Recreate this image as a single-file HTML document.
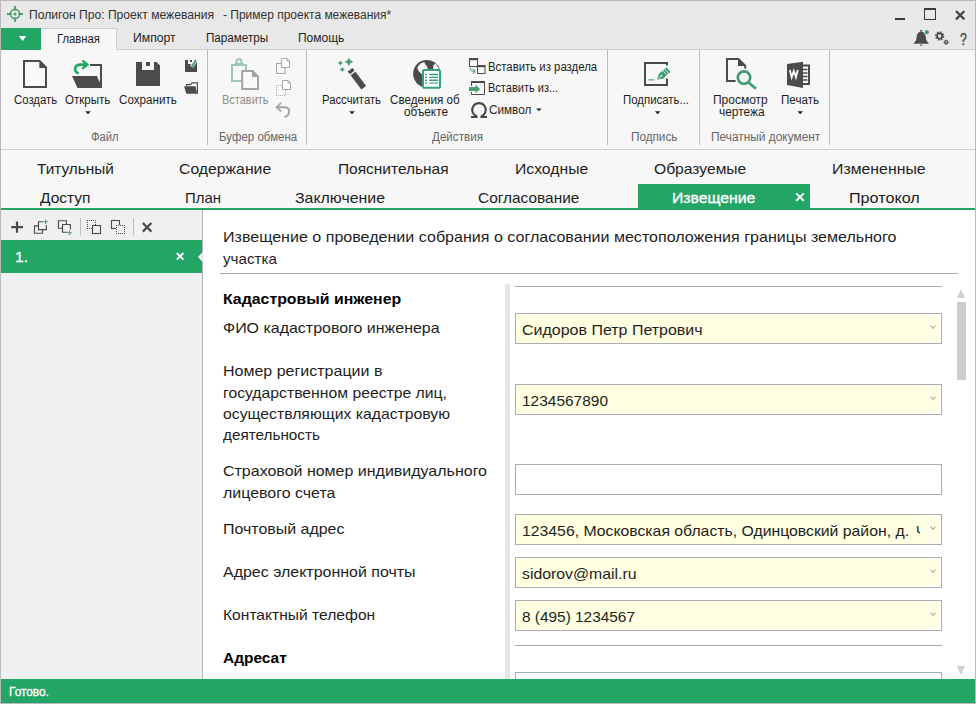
<!DOCTYPE html>
<html><head><meta charset="utf-8"><title>Полигон Про</title>
<style>
html,body{margin:0;padding:0;}
body{width:976px;height:704px;position:relative;overflow:hidden;background:#f7f7f7;font-family:"Liberation Sans",sans-serif;}
.t{position:absolute;white-space:pre;line-height:1;transform-origin:0 0;font-family:"Liberation Sans",sans-serif;}
.a{position:absolute;}
.f{position:absolute;left:515px;width:427px;height:31px;box-sizing:border-box;border:1px solid #abadb3;background:#fff;}
.f.y{background:#ffffe1;}
.f.y i{position:absolute;right:0;top:0;width:14px;height:27px;border:1px solid #fff;background:#ffffe6;}
.f.y i:after{content:"";position:absolute;left:5.1px;top:8.9px;width:2.9px;height:2.9px;border-right:1.1px solid #a3a3ab;border-bottom:1.1px solid #a3a3ab;transform:rotate(45deg);transform-origin:center;}
.w{-webkit-text-stroke:0.35px #fff;}
.q{-webkit-text-stroke:0.45px #4b4b4b;}

</style></head>
<body>
<!-- window frame -->
<div class="a" style="left:0;top:0;width:976px;height:28px;background:#e8e8e8"></div>
<div class="a" style="left:0;top:28px;width:976px;height:21px;background:#e8e8e8"></div>
<!-- file button -->
<!-- active menu tab -->
<div class="a" style="left:0;top:49px;width:976px;height:1px;background:#cdcdcd"></div>
<div class="a" style="left:41px;top:28px;width:76px;height:22px;background:#f7f7f7;border-top:1px solid #cfcfcf;border-right:1px solid #cfcfcf;box-sizing:border-box"></div>
<div class="a" style="left:1px;top:28px;width:40px;height:22px;background:#23a566"></div>
<!-- ribbon -->
<div class="a" style="left:0;top:50px;width:976px;height:99px;background:#f7f7f7"></div>
<div class="a" style="left:0;top:149px;width:976px;height:1px;background:#cfcfcf"></div>
<!-- ribbon separators -->
<div class="a" style="left:207px;top:50px;width:1px;height:95px;background:#bdbdbd"></div>
<div class="a" style="left:306px;top:50px;width:1px;height:95px;background:#bdbdbd"></div>
<div class="a" style="left:607px;top:50px;width:1px;height:95px;background:#bdbdbd"></div>
<div class="a" style="left:699px;top:50px;width:1px;height:95px;background:#bdbdbd"></div>
<div class="a" style="left:829px;top:50px;width:1px;height:95px;background:#bdbdbd"></div>
<!-- section tabs area -->
<div class="a" style="left:0;top:150px;width:976px;height:58px;background:#f7f7f7"></div>
<div class="a" style="left:638px;top:184px;width:172px;height:24px;background:#23a566"></div>
<div class="a" style="left:0;top:208px;width:976px;height:2px;background:#23a566"></div>
<!-- left panel -->
<div class="a" style="left:0;top:210px;width:202px;height:470px;background:#f0f0f0"></div>
<div class="a" style="left:202px;top:210px;width:1px;height:470px;background:#b5b5b5"></div>
<div class="a" style="left:1px;top:240px;width:201px;height:33px;background:#23a566"></div>
<!-- content -->
<div class="a" style="left:203px;top:210px;width:773px;height:470px;background:#fff"></div>
<div class="a" style="left:220px;top:273px;width:738px;height:1px;background:#a9a9a9"></div>
<!-- form -->
<div class="a" style="left:505px;top:284px;width:5px;height:396px;background:#e6e6e6"></div>
<div class="a" style="left:515px;top:286px;width:427px;height:1px;background:#a9a9a9"></div>
<div class="f y" style="top:313px"><i></i></div>
<div class="f y" style="top:384px"><i></i></div>
<div class="f" style="top:464px"></div>
<div class="f y" style="top:514px"><i></i></div>
<div class="f y" style="top:557px"><i></i></div>
<div class="f y" style="top:600px"><i></i></div>
<div class="a" style="left:515px;top:645px;width:427px;height:1px;background:#a9a9a9"></div>
<div class="f" style="top:672px"></div>
<!-- scrollbar -->
<div class="a" style="left:957px;top:302px;width:9px;height:78px;background:#cdcdcd"></div>
<div class="a" style="left:957px;top:289px;width:0;height:0;border-left:4.5px solid transparent;border-right:4.5px solid transparent;border-bottom:9px solid #d0d0d0"></div>
<div class="a" style="left:957px;top:666px;width:0;height:0;border-left:4.5px solid transparent;border-right:4.5px solid transparent;border-top:9px solid #d0d0d0"></div>
<svg class="a" style="left:0;top:0" width="976" height="704" viewBox="0 0 976 704">
<defs><style>.d{fill:#4b4b4b}.ds{stroke:#4b4b4b;fill:none}.g{fill:#3f9c70}.gs{stroke:#3f9c70;fill:none}.l{stroke:#a6a6a6;fill:none}</style></defs>
<path d="M18.9 36H26.3L22.6 40.9Z" fill="#fff"/>
<!-- app icon -->
<g class="gs" stroke="#4a9d6e" style="stroke:#4a9d6e">
<circle cx="15" cy="14" r="4.6" stroke-width="1.6"/>
<path d="M15 6V10.5M15 17.5V22M7 14H11.5M18.5 14H23" stroke-width="1.8"/>
</g>
<circle cx="15" cy="14" r="1.5" fill="#4a9d6e"/>
<!-- Create -->
<path d="M24 61H39.6L46 67.4V87H24Z" fill="#f9f9f9" stroke="#4b4b4b" stroke-width="2"/>
<path class="d" d="M39.4 60.4V68H47Z"/>
<!-- Open -->
<path class="ds" d="M90 65H101V86" stroke-width="2"/>
<path class="d" d="M72 76H97L100.2 84V88H77.5Z"/>
<path class="d" d="M100 80H102V88H98Z"/>
<path d="M78.6 73.4C73.6 71.2 73.6 64.6 81 64.6H86" fill="none" stroke="#1fa85e" stroke-width="2.6"/>
<path d="M82.4 60.6L87.4 64.6L82.2 68.8" fill="none" stroke="#1fa85e" stroke-width="2.4"/>
<!-- Save -->
<path class="d" d="M136 62H156.4L160 65.6V86H136Z"/>
<rect x="142" y="61.5" width="12" height="8.5" fill="#f7f7f7"/>
<rect class="d" x="146" y="62" width="4" height="4"/>
<!-- Save as small -->
<rect class="d" x="185" y="60" width="12" height="12"/>
<rect x="188" y="59.5" width="6" height="4.5" fill="#f7f7f7"/>
<rect class="d" x="190" y="60" width="2" height="2"/>
<path d="M191.6 66.8L196.2 59.6" stroke="#f7f7f7" stroke-width="3.6" fill="none"/>
<path d="M191.8 66.6L196 60" stroke="#4a9d6e" stroke-width="2" fill="none"/>
<!-- Folder small -->
<path d="M186.6 86V84.6H190.6L192.2 82.8H197.4V93.4" fill="#fff" stroke="#4b4b4b" stroke-width="1.2"/>
<path class="d" d="M184.1 86.2H195.6L196.9 93.8H186.3Z"/>
<path class="d" d="M196.8 90H198V93.8H196.4Z"/>
<!-- Paste (disabled) -->
<rect x="232" y="65" width="14" height="16" fill="none" stroke="#9dcbb2" stroke-width="2"/>
<rect x="234.6" y="62.6" width="8.8" height="2.6" fill="#9dcbb2"/>
<circle cx="239" cy="61.6" r="2.5" fill="#f7f7f7" stroke="#9dcbb2" stroke-width="2"/>
<path d="M242.2 71H252.6L258 76.4V89H242.2Z" fill="#fafafa" stroke="#a3a3a3" stroke-width="2"/>
<path d="M252 70.4V77H258.6Z" fill="#a3a3a3"/>
<!-- copy disabled -->
<g class="l" stroke-width="1">
<rect x="276.5" y="63.5" width="8.5" height="10" fill="#f7f7f7"/>
<path d="M281.5 58.5H287L289.5 61V67.5H281.5Z" fill="#fff"/>
<path d="M287 58.5V61H289.5"/>

<path d="M282.5 80.5H288L290.5 83V89.5H282.5Z" fill="#fff"/>
<path d="M288 80.5V83H290.5"/>
</g>
<g stroke="#a6a6a6" stroke-width="1" stroke-dasharray="1 1" fill="none" shape-rendering="crispEdges"><path d="M276 85.5H282"/><path d="M276 95.5H286"/><path d="M276.5 85V96"/><path d="M285.5 90V96"/></g>
<!-- undo disabled -->
<path d="M281.2 102.8L276.6 107.2L281.2 111.6" fill="none" stroke="#a6a6a6" stroke-width="1.8"/>
<path d="M276.8 107.2H285C290.6 107.2 290.6 115.4 284.4 117" fill="none" stroke="#a6a6a6" stroke-width="2"/>
<!-- Wand -->
<g transform="rotate(-37 357 78.8)">
<rect class="d" x="354" y="67.4" width="6" height="3.4"/>
<rect class="d" x="354" y="72.2" width="6" height="17.8"/>
</g>
<path class="g" d="M348.9 57.4L350.3 60.4L353.4 61.8L350.3 63.2L348.9 66.2L347.5 63.2L344.4 61.8L347.5 60.4Z"/>
<path class="g" d="M340.4 60.4L341.3 62.1L343 63L341.3 63.9L340.4 65.6L339.5 63.9L337.8 63L339.5 62.1Z"/>
<path class="g" d="M342.3 66.9L343.2 68.6L344.9 69.5L343.2 70.4L342.3 72.1L341.4 70.4L339.7 69.5L341.4 68.6Z"/>
<!-- Globe -->
<circle class="d" cx="426.8" cy="73.8" r="13.7"/>
<path d="M417.2 68.3L418.5 65.5L421 63.3L424.4 61.9L425 64L426.5 65.5L427.6 68V71H422V74.5L419 71.5Z" fill="#f7f7f7"/>
<path d="M433.4 65.2L435.6 63.6L438.8 68.6V70H433Z" fill="#f7f7f7"/>
<rect x="423" y="70" width="17" height="17.8" rx="1.6" fill="#fff" stroke="#2fa57b" stroke-width="2"/>
<path d="M429.2 74.5H438.2M429.2 77.4H438.2M429.2 80.3H438.2" stroke="#2fa57b" stroke-width="1.4"/>
<path d="M429.2 83.1H438.2" stroke="#6fc3a4" stroke-width="1.6"/>
<path d="M425 74.5H427M425 77.4H427M425 80.3H427" stroke="#2fa57b" stroke-width="1.4"/>
<path d="M425 83.1H427" stroke="#6fc3a4" stroke-width="1.6"/>
<!-- small: insert from section -->
<rect x="469.5" y="59.5" width="8" height="7" fill="none" stroke="#4b4b4b" stroke-width="1"/>
<rect class="d" x="469" y="58" width="9" height="2.2"/>
<rect x="477.5" y="66.5" width="7.5" height="7" fill="#f7f7f7" stroke="#4b4b4b" stroke-width="1"/>
<rect class="d" x="477" y="65" width="8.5" height="2.2"/>
<path d="M470.2 68C470.2 71.2 472 71.4 474.6 71.4M472.8 69.2L475 71.4L472.8 73.6" fill="none" stroke="#5aa680" stroke-width="1.2"/>
<!-- omega -->
<path d="M477 116.3A6.75 6.75 0 1 1 481 116.3" fill="none" stroke="#4b4b4b" stroke-width="2.1"/>
<path d="M471 117H477.6M480.4 117H487" fill="none" stroke="#4b4b4b" stroke-width="2"/>
<!-- small: insert from... -->
<path class="ds" d="M471.5 82V86M471.5 92V94.5H484.5V82" stroke-width="1"/>
<path class="ds" d="M471 82H485" stroke-width="2"/>
<path class="g" d="M469 87H475.5V84.8L480.2 89L475.5 93.2V91H469Z" style="fill:#4a9d6e"/>
<!-- Sign -->
<path class="ds" d="M667 65.4V63H645V85H667V78.6" stroke-width="2"/>
<path d="M648.2 79.8H654.4" stroke="#7dbd9c" stroke-width="1.6" fill="none"/>
<g transform="rotate(-41 657 79.6)">
<path d="M656.8 79.6L662.6 76.3L667 76.6V82.6L662.6 82.9Z" fill="#3f9c70"/>
<rect x="667.7" y="76.5" width="1.8" height="6.2" fill="#3f9c70"/>
<rect x="670.2" y="76.5" width="2" height="6.2" rx="0.5" fill="#3f9c70"/>
<path d="M657.8 79.6H662.4" stroke="#f7f7f7" stroke-width="0.8"/>
<circle cx="663" cy="79.6" r="0.9" fill="#f7f7f7"/>
</g>
<!-- Preview -->
<path class="ds" d="M735.6 81H727V59H738.4L745.2 65.8V68.4" stroke-width="2"/>
<path class="d" d="M738 58.4V66H745.8V65Z"/>
<circle cx="744" cy="77.6" r="6.2" fill="#f7f7f7" stroke="#3f9c70" stroke-width="2.6"/>
<path d="M748.6 82.4L756 88.8" stroke="#3f9c70" stroke-width="2.6" fill="none"/>
<!-- Word -->
<path class="d" d="M787 64L803 61.8V88L787 85Z"/>
<path class="ds" d="M803 65.4H809V84H803" stroke-width="2"/>
<path d="M803 69.5H807.5M803 73H807.5M803 76.5H807.5M803 80H807.5" stroke="#4b4b4b" stroke-width="1.3"/>
<path d="M789.8 70L791.7 77.3L793.8 71L795.9 77.3L797.8 70" fill="none" stroke="#fff" stroke-width="1.8"/>
<!-- min/max/close -->
<rect x="895" y="18" width="10" height="2" fill="#3a3a3a"/>
<rect x="924.5" y="8.5" width="11" height="11" fill="none" stroke="#3a3a3a" stroke-width="1"/>
<rect x="924" y="8" width="12" height="2" fill="#3a3a3a"/>
<path d="M956 11L964.4 19.4M964.4 11L956 19.4" stroke="#444" stroke-width="2.2" fill="none"/>
<!-- bell -->
<path class="d" d="M921.2 31.4C924 31.6 925.6 34 925.8 37C926 40.4 927 41.6 928.6 43V43.8H913.8V43C915.4 41.6 916.4 40.4 916.6 37C916.8 34 918.4 31.6 921.2 31.4Z"/>
<circle class="d" cx="921.2" cy="30.8" r="1"/>
<rect class="d" x="920" y="44.4" width="2.4" height="1.4" rx="0.7"/>
<circle cx="926.8" cy="32.2" r="2.5" fill="#3f9c70" stroke="#e8e8e8" stroke-width="0.8"/>
<!-- gears -->
<g class="ds" style="stroke:#4b4b4b">
<circle cx="939.6" cy="36" r="2.6" stroke-width="1.7"/>
<circle cx="939.6" cy="36" r="3.9" stroke-width="1.6" stroke-dasharray="1.5 1.56"/>
<circle cx="946.1" cy="42.2" r="1.4" stroke-width="1.2"/>
<circle cx="946.1" cy="42.2" r="2.2" stroke-width="1" stroke-dasharray="0.9 0.83"/>
</g>
<!-- tab close, item close -->
<path d="M796.2 193.4L803.8 200.8M803.8 193.4L796.2 200.8" stroke="#fff" stroke-width="2" fill="none"/>
<path d="M176.8 253L183.4 259.6M183.4 253L176.8 259.6" stroke="#fff" stroke-width="2" fill="none"/>
<path d="M202.5 252.2L198 257L202.5 261.8Z" fill="#fff"/>
<!-- left toolbar -->
<path d="M17 221.4V232.8M11.2 227.1H23" stroke="#4b4b4b" stroke-width="2.2" fill="none"/>
<g class="ds" stroke-width="1.1">
<path d="M38 225.9H34.5V233.3H42.5V230"/>
<path d="M43 221.8H38.5V229.6H46.4V225"/>
<path d="M62 228.3H58.5V220.8H66.4V224"/>
<path d="M66.8 224.5H62.5V232.3H67.5M70.4 229.5V224.5H66.4"/>


<rect x="111.5" y="220.5" width="8" height="8"/>

</g>
<g stroke="#4b4b4b" stroke-width="1" stroke-dasharray="1 1" fill="none" shape-rendering="crispEdges"><path d="M87 220.5H96"/><path d="M87 228.5H96"/><path d="M87.5 220V229"/><path d="M95.5 220V229"/></g>
<rect x="92.5" y="225.5" width="8" height="8" fill="#f0f0f0" stroke="#4b4b4b" stroke-width="1.1"/>
<rect x="116" y="225" width="9" height="9" fill="#f0f0f0"/><g stroke="#4b4b4b" stroke-width="1" stroke-dasharray="1 1" fill="none" shape-rendering="crispEdges"><path d="M116 225.5H125"/><path d="M116 233.5H125"/><path d="M116.5 225V234"/><path d="M124.5 225V234"/></g>
<path d="M45.6 219.4V224M43.3 221.7H47.9" stroke="#4a9d6e" stroke-width="1.1" fill="none"/>
<path d="M69.6 230.4V235M67.3 232.7H71.9" stroke="#4a9d6e" stroke-width="1.1" fill="none"/>
<path d="M80.5 218V235.6M133.5 218V235.6" stroke="#b9c0c8" stroke-width="1"/>
<path d="M142.8 223L151.4 231.6M151.4 223L142.8 231.6" stroke="#4b4b4b" stroke-width="2.2" fill="none"/>
<!-- dropdown arrows -->
<g fill="#222">
<path d="M85.2 111.2H90.8L88 114.2Z"/>
<path d="M349.2 111.2H354.8L352 114.2Z"/>
<path d="M654.9 111.2H660.5L657.7 114.2Z"/>
<path d="M797.4 111.2H803L800.2 114.2Z"/>
<path d="M536.2 108.4H541.6L538.9 111.2Z"/>
</g>
</svg>

<!-- status bar -->
<div class="a" style="left:0;top:679px;width:976px;height:25px;background:#23a566"></div>
<!-- window border -->
<div class="a" style="left:0;top:0;width:976px;height:704px;box-sizing:border-box;border:1px solid #b9b9b9;pointer-events:none"></div>

<!-- text -->
<span class="t" style="left:29.20px;top:8.84px;font-size:12px;color:#333;transform:scaleX(1.0096)">Полигон Про: Проект межевания</span>
<span class="t" style="left:222.60px;top:8.84px;font-size:12px;color:#333;transform:scaleX(0.9985)">- Пример проекта межевания*</span>
<span class="t" style="left:57.00px;top:32.84px;font-size:12px;color:#1e1e1e;transform:scaleX(0.9412)">Главная</span>
<span class="t" style="left:132.50px;top:31.84px;font-size:12px;color:#1e1e1e;transform:scaleX(1.0178)">Импорт</span>
<span class="t" style="left:205.50px;top:31.84px;font-size:12px;color:#1e1e1e;transform:scaleX(0.9708)">Параметры</span>
<span class="t" style="left:298.30px;top:31.84px;font-size:12px;color:#1e1e1e;transform:scaleX(0.9987)">Помощь</span>
<span class="t" style="left:13.80px;top:93.64px;font-size:12px;color:#1e1e1e;transform:scaleX(0.9472)">Создать</span>
<span class="t" style="left:65.40px;top:93.64px;font-size:12px;color:#1e1e1e;transform:scaleX(0.9631)">Открыть</span>
<span class="t" style="left:119.20px;top:93.64px;font-size:12px;color:#1e1e1e;transform:scaleX(0.9691)">Сохранить</span>
<span class="t" style="left:221.80px;top:93.64px;font-size:12px;color:#8d8d8d;transform:scaleX(0.9140)">Вставить</span>
<span class="t" style="left:322.40px;top:93.64px;font-size:12px;color:#1e1e1e;transform:scaleX(0.9421)">Рассчитать</span>
<span class="t" style="left:390.00px;top:93.64px;font-size:12px;color:#1e1e1e;transform:scaleX(0.9707)">Сведения об</span>
<span class="t" style="left:403.60px;top:106.34px;font-size:12px;color:#1e1e1e;transform:scaleX(0.9832)">объекте</span>
<span class="t" style="left:623.20px;top:93.64px;font-size:12px;color:#1e1e1e;transform:scaleX(0.9509)">Подписать...</span>
<span class="t" style="left:713.20px;top:93.64px;font-size:12px;color:#1e1e1e;transform:scaleX(0.9998)">Просмотр</span>
<span class="t" style="left:719.30px;top:106.34px;font-size:12px;color:#1e1e1e;transform:scaleX(0.9948)">чертежа</span>
<span class="t" style="left:780.70px;top:93.64px;font-size:12px;color:#1e1e1e;transform:scaleX(0.9666)">Печать</span>
<span class="t" style="left:91.20px;top:131.24px;font-size:12px;color:#666;transform:scaleX(0.9351)">Файл</span>
<span class="t" style="left:218.60px;top:131.24px;font-size:12px;color:#666;transform:scaleX(0.9590)">Буфер обмена</span>
<span class="t" style="left:432.00px;top:131.24px;font-size:12px;color:#666;transform:scaleX(0.9700)">Действия</span>
<span class="t" style="left:631.20px;top:131.24px;font-size:12px;color:#666;transform:scaleX(0.9768)">Подпись</span>
<span class="t" style="left:710.70px;top:131.24px;font-size:12px;color:#666;transform:scaleX(0.9907)">Печатный документ</span>
<span class="t" style="left:487.50px;top:60.84px;font-size:12px;color:#1e1e1e;transform:scaleX(0.9474)">Вставить из раздела</span>
<span class="t" style="left:487.50px;top:82.34px;font-size:12px;color:#1e1e1e;transform:scaleX(0.9175)">Вставить из...</span>
<span class="t" style="left:489.30px;top:103.64px;font-size:12px;color:#1e1e1e;transform:scaleX(0.9773)">Символ</span>
<span class="t q" style="left:960.20px;top:30.82px;font-size:16.4px;color:#4b4b4b;transform:scaleX(0.7452)">?</span>
<span class="t" style="left:37.00px;top:160.90px;font-size:15px;color:#1e1e1e;transform:scaleX(1.0225)">Титульный</span>
<span class="t" style="left:179.00px;top:160.90px;font-size:15px;color:#1e1e1e;transform:scaleX(1.0516)">Содержание</span>
<span class="t" style="left:338.40px;top:160.90px;font-size:15px;color:#1e1e1e;transform:scaleX(1.0309)">Пояснительная</span>
<span class="t" style="left:515.40px;top:160.90px;font-size:15px;color:#1e1e1e;transform:scaleX(1.0488)">Исходные</span>
<span class="t" style="left:654.30px;top:160.90px;font-size:15px;color:#1e1e1e;transform:scaleX(1.0418)">Образуемые</span>
<span class="t" style="left:832.40px;top:160.90px;font-size:15px;color:#1e1e1e;transform:scaleX(1.0559)">Измененные</span>
<span class="t" style="left:40.00px;top:189.80px;font-size:15px;color:#1e1e1e;transform:scaleX(1.0339)">Доступ</span>
<span class="t" style="left:184.50px;top:189.80px;font-size:15px;color:#1e1e1e;transform:scaleX(0.9952)">План</span>
<span class="t" style="left:295.20px;top:189.80px;font-size:15px;color:#1e1e1e;transform:scaleX(1.0592)">Заключение</span>
<span class="t" style="left:478.40px;top:189.80px;font-size:15px;color:#1e1e1e;transform:scaleX(1.0286)">Согласование</span>
<span class="t w" style="left:672.40px;top:189.80px;font-size:15px;color:#fff;transform:scaleX(1.0513)">Извещение</span>
<span class="t" style="left:849.40px;top:189.80px;font-size:15px;color:#1e1e1e;transform:scaleX(1.0778)">Протокол</span>
<span class="t w" style="left:15.00px;top:249.30px;font-size:15px;color:#fff;transform:scaleX(1.0387)">1.</span>
<span class="t" style="left:223.00px;top:229.30px;font-size:15px;color:#1e1e1e;transform:scaleX(1.0701)">Извещение о проведении собрания о согласовании местоположения границы земельного</span>
<span class="t" style="left:223.00px;top:251.30px;font-size:15px;color:#1e1e1e;transform:scaleX(1.0138)">участка</span>
<span class="t" style="left:223.20px;top:291.05px;font-size:15px;color:#000;font-weight:bold;transform:scaleX(1.0569)">Кадастровый инженер</span>
<span class="t" style="left:223.00px;top:319.80px;font-size:15px;color:#1e1e1e;transform:scaleX(1.0640)">ФИО кадастрового инженера</span>
<span class="t" style="left:223.00px;top:363.05px;font-size:15px;color:#1e1e1e;transform:scaleX(1.0668)">Номер регистрации в</span>
<span class="t" style="left:223.00px;top:384.80px;font-size:15px;color:#1e1e1e;transform:scaleX(1.0493)">государственном реестре лиц,</span>
<span class="t" style="left:223.00px;top:406.05px;font-size:15px;color:#1e1e1e;transform:scaleX(1.0502)">осуществляющих кадастровую</span>
<span class="t" style="left:223.00px;top:427.30px;font-size:15px;color:#1e1e1e;transform:scaleX(1.0194)">деятельность</span>
<span class="t" style="left:223.00px;top:463.30px;font-size:15px;color:#1e1e1e;transform:scaleX(1.0654)">Страховой номер индивидуального</span>
<span class="t" style="left:223.00px;top:485.05px;font-size:15px;color:#1e1e1e;transform:scaleX(1.0630)">лицевого счета</span>
<span class="t" style="left:223.00px;top:521.30px;font-size:15px;color:#1e1e1e;transform:scaleX(1.0627)">Почтовый адрес</span>
<span class="t" style="left:223.00px;top:564.30px;font-size:15px;color:#1e1e1e;transform:scaleX(1.0648)">Адрес электронной почты</span>
<span class="t" style="left:223.00px;top:607.05px;font-size:15px;color:#1e1e1e;transform:scaleX(1.0408)">Контактный телефон</span>
<span class="t" style="left:223.20px;top:650.05px;font-size:15px;color:#000;font-weight:bold;transform:scaleX(1.0311)">Адресат</span>
<span class="t" style="left:522.00px;top:322.30px;font-size:15px;color:#1e1e1e;transform:scaleX(1.0656)">Сидоров Петр Петрович</span>
<span class="t" style="left:522.00px;top:392.80px;font-size:15px;color:#1e1e1e;transform:scaleX(1.0307)">1234567890</span>
<span class="t" style="left:522.00px;top:523.30px;font-size:15px;color:#1e1e1e;transform:scaleX(1.0519)">123456, Московская область, Одинцовский район, д.</span>
<div class="a" style="left:916.00px;top:523.30px;width:4.00px;height:18px;overflow:hidden"><span class="t" style="left:0;top:0;font-size:15px;color:#1e1e1e;transform:scaleX(0.9400)">Ч</span></div>
<span class="t" style="left:522.00px;top:565.80px;font-size:15px;color:#1e1e1e;transform:scaleX(1.0553)">sidorov@mail.ru</span>
<span class="t" style="left:522.00px;top:608.80px;font-size:15px;color:#1e1e1e;transform:scaleX(1.0264)">8 (495) 1234567</span>
<span class="t w" style="left:9.40px;top:685.84px;font-size:12px;color:#fff;transform:scaleX(0.9879)">Готово.</span>
</body></html>
